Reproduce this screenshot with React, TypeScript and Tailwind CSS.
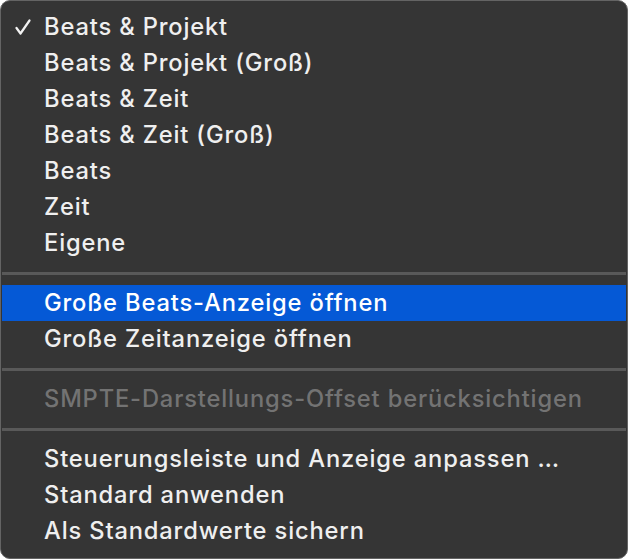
import React from "react";

type Item = { label: string; checked?: boolean; active?: boolean; disabled?: boolean };

const groups: Item[][] = [
  [
    { label: "Beats & Projekt", checked: true },
    { label: "Beats & Projekt (Groß)" },
    { label: "Beats & Zeit" },
    { label: "Beats & Zeit (Groß)" },
    { label: "Beats" },
    { label: "Zeit" },
    { label: "Eigene" },
  ],
  [{ label: "Große Beats-Anzeige öffnen", active: true }, { label: "Große Zeitanzeige öffnen" }],
  [{ label: "SMPTE-Darstellungs-Offset berücksichtigen", disabled: true }],
  [
    { label: "Steuerungsleiste und Anzeige anpassen …" },
    { label: "Standard anwenden" },
    { label: "Als Standardwerte sichern" },
  ],
];

function Check() {
  return (
    <svg width="16" height="17" viewBox="0 0 16 17" className="absolute left-[13px] top-[10px]">
      <path d="M1.5 9 L5.5 14.5 L14.5 1.5" fill="none" stroke="#f2f2f2" strokeWidth="2.2" strokeLinecap="round" strokeLinejoin="round" />
    </svg>
  );
}

export default function App() {
  return (
    <div className="h-[559px] w-[628px] bg-white font-['Inter',sans-serif]">
      <div className="h-[559px] w-[628px] rounded-[10px] border border-[#646464] bg-[#353535] px-px pb-[8px] pt-[8px]">
        {groups.map((group, gi) => (
          <div key={gi}>
            {gi > 0 && (
              <div className="flex h-[24px] items-center">
                <div className="h-[3px] w-full bg-[#595959]" />
              </div>
            )}
            {group.map((item) => (
              <div
                key={item.label}
                className={`relative flex h-[36px] items-center pl-[42px] text-[23.7px] font-medium tracking-[0.85px] ${
                  item.active ? "bg-[#0559d6] text-white" : item.disabled ? "text-[#737373]" : "text-[#efefef]"
                }`}
              >
                {item.checked && <Check />}
                {item.label}
              </div>
            ))}
          </div>
        ))}
      </div>
    </div>
  );
}
